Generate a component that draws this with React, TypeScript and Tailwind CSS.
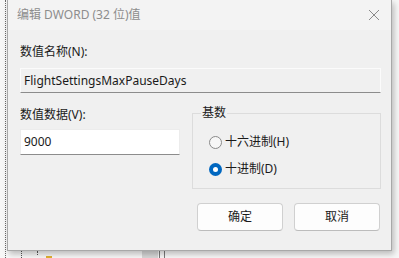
import React from "react";

const font = { fontFamily: '"Noto Sans", "Noto Sans CJK SC", sans-serif' };

function Radio({ label, checked }: { label: string; checked?: boolean }) {
    return (
        <div className="flex items-center h-[16px] text-[12px] text-[#1a1a1a]">
            {checked ? (
                <span className="w-[13px] h-[13px] rounded-full bg-[#0067c0] flex items-center justify-center">
                    <span className="w-[5px] h-[5px] rounded-full bg-white" />
                </span>
            ) : (
                <span className="w-[13px] h-[13px] rounded-full border border-[#8a8a8a] bg-[#f7f7f7]" />
            )}
            <span className="ml-[3px] leading-[16px]">{label}</span>
        </div>
    );
}

export default function App() {
    return (
        <div className="w-[399px] h-[258px] overflow-hidden bg-[#f7f7f7] relative" style={font}>
            {/* desktop behind dialog */}
            <div className="absolute left-[5px] top-0 h-full border-l border-dotted border-[#6a6a6a]" />
            <div className="absolute left-[142px] top-[250px] w-[16px] h-[8px] bg-[#d6d6d6]" />
            <div className="absolute left-[159px] top-[250px] w-px h-[8px] bg-[#7a7a7a]" />
            <div className="absolute left-[164px] top-[250px] w-px h-[8px] bg-[#7a7a7a]" />
            <div className="absolute left-[46px] top-[256px] w-[6px] h-[2px] bg-[#e0b030]" />
            <div className="absolute left-[21px] top-[250px] w-px h-[8px] border-l border-dotted border-[#555]" />
            <div className="absolute left-[37px] top-[251px] w-px h-[4px] border-l border-dotted border-[#555]" />

            <div className="ml-[7px] w-[385px] h-[251px] border border-t-0 border-[#a8a8a8] bg-[#f0f0f0] shadow-[2px_3px_6px_rgba(0,0,0,0.25)] flex flex-col relative">
                {/* title bar */}
                <div className="h-[30px] bg-[#f3f3f3] flex items-center justify-between pl-[9px] pr-[8px]">
                    <span className="text-[12px] text-[#8d8d8d]">编辑 DWORD (32 位)值</span>
                    <svg width="12" height="12" viewBox="0 0 12 12" className="mr-[3px]">
                        <path d="M1 1 L11 11 M11 1 L1 11" stroke="#8a8a8a" strokeWidth="1" />
                    </svg>
                </div>

                <div className="pl-[12px] pr-[10px] pt-[14px] flex flex-col">
                    <div className="text-[12px] leading-[16px] text-[#1a1a1a]">数值名称(N):</div>
                    <div className="mt-[8px] h-[25px] w-[361px] bg-[#f0f0f0] border border-[#fbfbfb] border-b-[#8c8c8c] flex items-center pl-[3px] text-[12px] text-[#1a1a1a]">
                        FlightSettingsMaxPauseDays
                    </div>

                    <div className="flex mt-[14px]">
                        <div className="flex flex-col w-[160px]">
                            <div className="text-[12px] leading-[16px] text-[#1a1a1a]">数值数据(V):</div>
                            <div className="mt-[6px] h-[26px] w-[160px] bg-white border border-[#ececec] border-b-[#8c8c8c] flex items-center pl-[3px] text-[12px] text-[#1a1a1a]">
                                9000
                            </div>
                        </div>
                        <div className="ml-[12px] mt-[6px] w-[190px] h-[76px] border border-[#dcdcdc] relative flex flex-col pl-[16px] pt-[20px] gap-[11px]">
                            <span className="absolute left-[8px] top-[-9px] px-px bg-[#f0f0f0] text-[12px] leading-[16px] text-[#1a1a1a]">基数</span>
                            <Radio label="十六进制(H)" />
                            <Radio label="十进制(D)" checked />
                        </div>
                    </div>

                    <div className="flex justify-end gap-[11px] mt-[14px] pr-px">
                        <button className="w-[86px] h-[28px] rounded-[4px] border border-[#d0d0d0] border-b-[#bcbcbc] bg-[#fdfdfd] text-[12px] text-[#1a1a1a]">确定</button>
                        <button className="w-[86px] h-[28px] rounded-[4px] border border-[#d0d0d0] border-b-[#bcbcbc] bg-[#fdfdfd] text-[12px] text-[#1a1a1a]">取消</button>
                    </div>
                </div>
            </div>
        </div>
    );
}
